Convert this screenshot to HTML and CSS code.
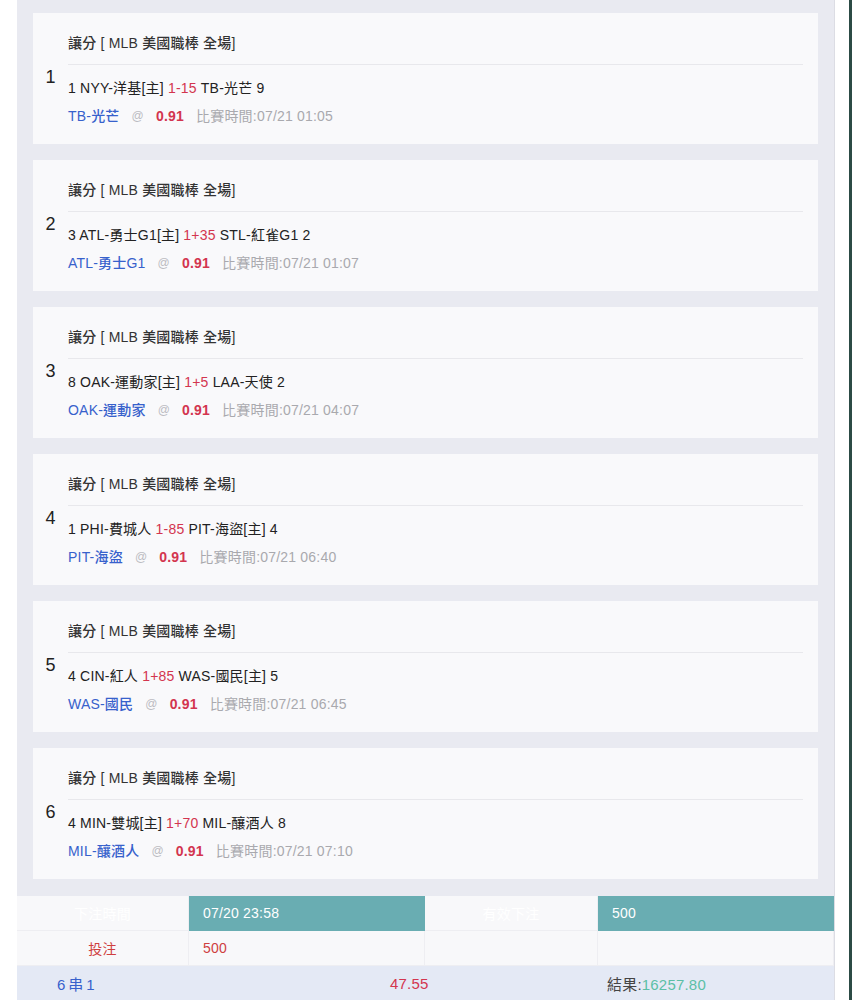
FILE: index.html
```html
<!DOCTYPE html>
<html lang="zh-Hant">
<head>
  <meta charset="UTF-8">
  <title>注單明細</title>
  <link rel="stylesheet" href="styles.css">
</head>
<body>
  <div class="frame">
    <div class="panel">

      <div class="card">
        <div class="idx">1</div>
        <div class="body">
          <div class="title">讓分 [ MLB 美國職棒 全場]</div>
          <div class="match">1 NYY-洋基[主] <span class="hcp">1-15</span> TB-光芒 9</div>
          <div class="pick">
            <span class="team">TB-光芒</span>
            <span class="at">@</span>
            <span class="odds">0.91</span>
            <span class="time">比賽時間:07/21 01:05</span>
          </div>
        </div>
      </div>

      <div class="card">
        <div class="idx">2</div>
        <div class="body">
          <div class="title">讓分 [ MLB 美國職棒 全場]</div>
          <div class="match">3 ATL-勇士G1[主] <span class="hcp">1+35</span> STL-紅雀G1 2</div>
          <div class="pick">
            <span class="team">ATL-勇士G1</span>
            <span class="at">@</span>
            <span class="odds">0.91</span>
            <span class="time">比賽時間:07/21 01:07</span>
          </div>
        </div>
      </div>

      <div class="card">
        <div class="idx">3</div>
        <div class="body">
          <div class="title">讓分 [ MLB 美國職棒 全場]</div>
          <div class="match">8 OAK-運動家[主] <span class="hcp">1+5</span> LAA-天使 2</div>
          <div class="pick">
            <span class="team">OAK-運動家</span>
            <span class="at">@</span>
            <span class="odds">0.91</span>
            <span class="time">比賽時間:07/21 04:07</span>
          </div>
        </div>
      </div>

      <div class="card">
        <div class="idx">4</div>
        <div class="body">
          <div class="title">讓分 [ MLB 美國職棒 全場]</div>
          <div class="match">1 PHI-費城人 <span class="hcp">1-85</span> PIT-海盜[主] 4</div>
          <div class="pick">
            <span class="team">PIT-海盜</span>
            <span class="at">@</span>
            <span class="odds">0.91</span>
            <span class="time">比賽時間:07/21 06:40</span>
          </div>
        </div>
      </div>

      <div class="card">
        <div class="idx">5</div>
        <div class="body">
          <div class="title">讓分 [ MLB 美國職棒 全場]</div>
          <div class="match">4 CIN-紅人 <span class="hcp">1+85</span> WAS-國民[主] 5</div>
          <div class="pick">
            <span class="team">WAS-國民</span>
            <span class="at">@</span>
            <span class="odds">0.91</span>
            <span class="time">比賽時間:07/21 06:45</span>
          </div>
        </div>
      </div>

      <div class="card">
        <div class="idx">6</div>
        <div class="body">
          <div class="title">讓分 [ MLB 美國職棒 全場]</div>
          <div class="match">4 MIN-雙城[主] <span class="hcp">1+70</span> MIL-釀酒人 8</div>
          <div class="pick">
            <span class="team">MIL-釀酒人</span>
            <span class="at">@</span>
            <span class="odds">0.91</span>
            <span class="time">比賽時間:07/21 07:10</span>
          </div>
        </div>
      </div>

      <div class="summary">
        <div class="row">
          <div class="cell label">下注時間</div>
          <div class="cell value">07/20 23:58</div>
          <div class="cell label">有效下注</div>
          <div class="cell value">500</div>
        </div>
        <div class="row">
          <div class="cell label red">投注</div>
          <div class="cell plain red">500</div>
          <div class="cell plain"></div>
          <div class="cell plain"></div>
        </div>
        <div class="total">
          <div class="combo">6串1</div>
          <div class="rate">47.55</div>
          <div class="result">結果:<span class="win">16257.80</span></div>
        </div>
      </div>

    </div>
  </div>
</body>
</html>
```

FILE: styles.css
```css
body { margin: 0; background: #fff; font-family: "Liberation Sans", "Noto Sans CJK TC", sans-serif; font-size: 14px; letter-spacing: 0.2px; color: #333; }
.frame { width: 849px; height: 1000px; overflow: hidden; border-right: 3px solid #2c4b45; }
.panel { margin-left: 17px; width: 817px; border-right: 1px solid #dcdde4; background: #e9eaf1; padding-top: 13px; min-height: 987px; }

.card { display: flex; align-items: center; margin: 0 16px 16px 16px; background: #f9f9fb; height: 131px; }
.idx { width: 35px; text-align: center; font-size: 18px; color: #222; flex-shrink: 0; margin-top: -2px; }
.body { flex: 1; padding: 20px 15px 18px 0; }
.title { line-height: 20px; height: 20px; padding-bottom: 11px; border-bottom: 1px solid #e8e8ec; font-weight: 500; color: #333; }
.match { line-height: 20px; height: 20px; margin-top: 13px; color: #222; }
.hcp { color: #d3354f; }
.pick { display: flex; gap: 12px; line-height: 20px; height: 20px; margin-top: 8px; }
.team { color: #3761cc; font-weight: 500; }
.at { color: #bcbcc2; font-size: 12px; }
.odds { color: #d3354f; font-weight: bold; }
.time { color: #a9a9ae; }

.summary { margin-top: 17px; }
.row { display: grid; grid-template-columns: 172px 236px 173px 236px; height: 35px; }
.cell { display: flex; align-items: center; background: #f8f8fa; border-right: 1px solid #eeeef2; border-bottom: 1px solid #eeeef2; }
.cell.label { justify-content: center; color: #fff; }
.cell.value { background: #69adb2; color: #fff; padding-left: 14px; border-color: #69adb2; }
.cell.plain { padding-left: 14px; }
.red { color: #cf3f3f !important; }
.total { display: grid; grid-template-columns: 373px 217px 1fr; height: 35px; align-items: center; background: #e4e9f5; font-size: 15px; }
.combo { padding-left: 40px; color: #3761cc; letter-spacing: 3px; }
.rate { color: #d3354f; }
.result { color: #444; }
.win { color: #5cbfa6; }
```
